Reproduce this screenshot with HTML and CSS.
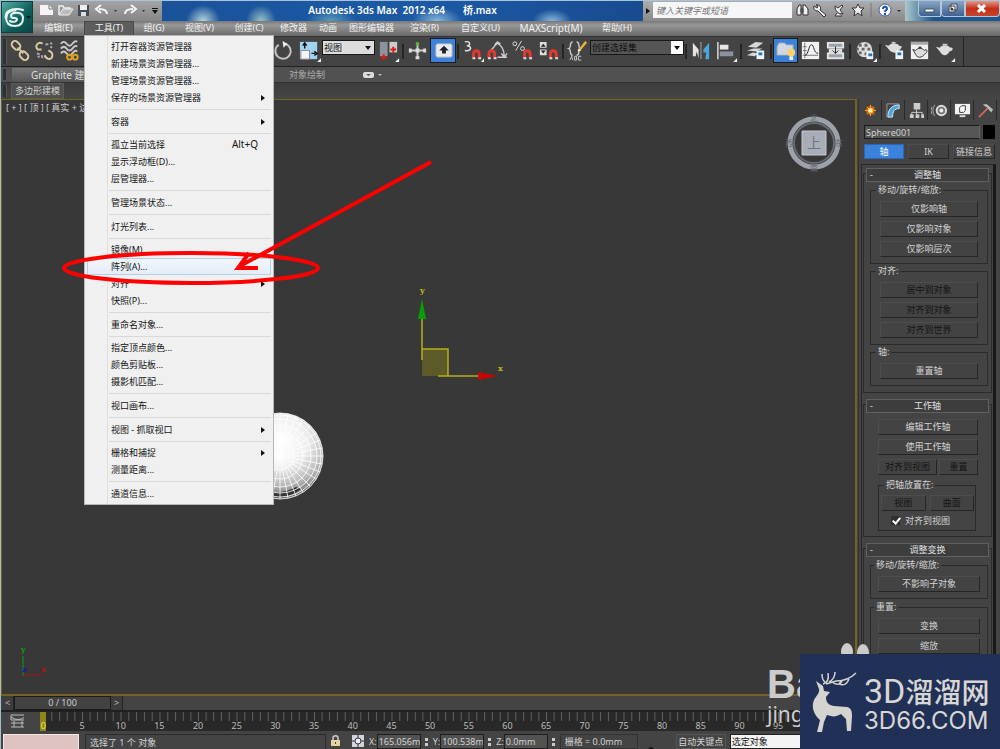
FILE: index.html
```html
<!DOCTYPE html>
<html lang="zh-CN">
<head>
<meta charset="utf-8">
<title>Autodesk 3ds Max 2012 x64 桥.max</title>
<link rel="stylesheet" href="styles.css">
</head>
<body>
<div class="app">
<header class="top">
  <button class="app-logo" aria-label="应用程序">
    <svg width="31" height="30" viewBox="0 0 31 30"><g fill="none" stroke="#e8f6f2" stroke-linecap="round"><path d="M21 8C14 6 4 7 4 15c0 8 5 9 9 9 6 0 8-4 8-8 0-5-5-6-9-5-4 1-4 5 0 5 3 0 4 1 2 3-1 1-4 1-6 0" stroke-width="2"/><path d="M4 15c0-5 4-7 9-7" stroke-width="3"/></g><path d="M24 14h5l-2.500 3z" fill="#0a2020"/></svg>
  </button>
  <div class="titlebar">
    <div class="quick">
      <svg width="126" height="18" viewBox="0 0 126 18">
        <path d="M7 4h9l4 4v6H7z" fill="#f4f4f4"/><path d="M16 4v4h4" fill="none" stroke="#777"/>
        <path d="M26 14V5h4l1 2h6v2" fill="none" stroke="#eee" stroke-width="1.500"/><path d="M26 14l4-6h10l-4 6z" fill="#bbb" stroke="#f0f0f0"/>
        <path d="M45 4h11v11H45z" fill="#444b55"/><path d="M47 4h7v5h-7z" fill="#eee"/><path d="M48 11h5v4h-5z" fill="#ddd"/>
        <path d="M74 13c0-4-3-5-8-5M68 4l-5 4 5 4" fill="none" stroke="#f4f4f4" stroke-width="2"/>
        <path d="M92 13c0-4 3-5 8-5M98 4l5 4-5 4" fill="none" stroke="#f4f4f4" stroke-width="2"/>
        <path d="M81 9h3l-1.500 2zM109 9h3l-1.500 2z" fill="#333"/><path d="M119 9h6l-3 4zM119 7h6v1h-6z" fill="#111"/>
      </svg>
    </div>
    <div class="caption"><span>Autodesk 3ds Max&nbsp; 2012 x64</span><span>桥.max</span></div>
    <div class="infocenter">
      <svg width="10" height="18" viewBox="0 0 10 18"><path d="M3 7l4 3-4 3z" fill="#111"/></svg>
      <input class="search" aria-label="搜索" placeholder="键入关键字或短语">
      <svg width="113" height="18" viewBox="0 0 113 18">
        <g fill="#eee" stroke="#333"><path d="M5 14V8l2-4h2v10zM11 14V4h2l3 4v6zM9 8h2v3H9z"/><path d="M24 4c3-1 6 2 4 5l6 5-2 2-6-6c-3 0-5-2-4-5l3 2 1-2z"/><path d="M43 5c0 5 3 8 8 8l-3-4 3-4-1-1-4 3zM45 12l-2 3h7"/><path d="M66 3l2 4h4l-3 3 1 5-4-3-4 3 1-5-3-3h4z"/></g>
        <path d="M79 2v14" stroke="#777"/><circle cx="93" cy="9" r="6" fill="#fff" stroke="#3d63a8"/><path d="M91 8c0-3 4-3 4 0 0 1-2 1-2 3M93 12v2" fill="none" stroke="#1d4faf" stroke-width="2"/><path d="M105 9h4l-2 2z" fill="#333"/>
      </svg>
    </div>
    <div class="window-buttons">
      <button aria-label="最小化"><svg width="12" height="10"><path d="M1 5h9v3H1z" fill="#fff" stroke="#456"/></svg></button><button aria-label="还原"><svg width="12" height="11"><path d="M4 1h6v6H4zM2 3h6v6H2z" fill="#eee" stroke="#445"/><path d="M4 5h2v2H4z" fill="#345"/></svg></button><button class="close" aria-label="关闭"><svg width="12" height="10"><path d="M2 1l7 7M9 1L2 8" stroke="#fff" stroke-width="3"/></svg></button>
    </div>
  </div>
  <nav class="menubar">
    <button class="w-edit">编辑(E)</button><button class="w-tools open">工具(T)</button><button class="w-group">组(G)</button><button class="w-views">视图(V)</button><button class="w-create">创建(C)</button><button class="w-mod">修改器</button><button class="w-anim">动画</button><button class="w-graph">图形编辑器</button><button class="w-render">渲染(R)</button><button class="w-custom">自定义(U)</button><button class="w-script">MAXScript(M)</button><button class="w-help">帮助(H)</button>
  </nav>
</header>

<div class="toolbar">
  <i class="grip"></i>
  <button aria-label="选择并链接"><svg viewBox="0 0 24 24"><g fill="none" stroke="#d9c9a0" stroke-width="2"><rect x="3" y="3" width="10" height="7" rx="3.500" transform="rotate(45 8 7)"/><rect x="12" y="14" width="10" height="7" rx="3.500" transform="rotate(45 17 17)"/><path d="M10 9l6 6"/></g></svg></button>
  <button aria-label="断开链接"><svg viewBox="0 0 24 24"><g fill="none" stroke="#d9c9a0" stroke-width="2"><path d="M10 5c-4-3-9 2-5 6l4 0M16 12c6 2 5 8 1 9-3 0-4-2-5-4"/></g><path d="M13 6l3-1M18 4l2 1M18 8l2 1M4 15l3 1M5 19l2-1M9 17l1 3" stroke="#aaa" stroke-width="2"/></svg></button>
  <button aria-label="绑定到空间扭曲"><svg viewBox="0 0 24 24"><path d="M3 5q3-4 6 0t6 0 5-2M3 10q3-4 6 0t6 0 5-2M3 15q3-4 6 0t6 0 5-2" fill="none" stroke="#c8c8c8" stroke-width="2"/><g fill="none" stroke="#e0a020" stroke-width="2"><circle cx="12" cy="19" r="2.500"/><circle cx="18" cy="19" r="2.500"/></g></svg></button>
  <span class="covered"></span>
  <button class="wide" aria-label="选择并旋转"><svg viewBox="0 0 24 24"><path d="M14 5a8 8 0 1 1-7 1" fill="none" stroke="#c4c4c4" stroke-width="2"/><path d="M11 2l5 3-4 4z" fill="#eee"/></svg></button>
  <button class="wide" aria-label="选择并缩放"><svg viewBox="0 0 24 24"><path d="M2 3h18v18H2z" fill="#9fd3f0"/><path d="M3 12h9v9H3z" fill="#f4f4f4" stroke="#889"/><path d="M7 10V5M5 7l2-3 2 3M14 15h4M17 13l3 2-3 2" fill="none" stroke="#111" stroke-width="1.500"/><path d="M24 20v4h-4z" fill="#fff"/></svg></button>
  <div class="combo light"><select aria-label="参考坐标系"><option>视图</option></select></div>
  <button class="wide" aria-label="使用轴点中心"><svg viewBox="0 0 24 24"><path d="M3 3h8v15H3z" fill="#8d939c"/><path d="M13 3h8v11h-8z" fill="#ccc"/><path d="M7 16v6M4 19h6M17 8v6M14 11h6" stroke="#e01515" stroke-width="2"/><path d="M23 20v4h-4z" fill="#fff"/></svg></button>
  <i class="sep"></i>
  <button aria-label="选择并操纵"><svg viewBox="0 0 24 24"><path d="M12 4v16M4 12h16" stroke="#ccc" stroke-width="2"/><path d="M10 10h4v4h-4zM3 10h3v4H3zM18 10h3v4h-3zM10 18h4v3h-4z" fill="#ddd"/><circle cx="12" cy="5" r="2" fill="#52b82e"/></svg></button>
  <button class="wide active" aria-label="键盘快捷键覆盖"><svg viewBox="0 0 24 24"><rect x="4" y="5" width="17" height="14" rx="2" fill="#e8ebef" stroke="#aaa"/><path d="M12.500 7l5 5h-3v3h-4v-3h-3z" fill="#222"/></svg></button>
  <i class="sep"></i>
  <button aria-label="捕捉开关"><svg viewBox="0 0 24 24"><path d="M4 3q5-1 5 2 0 2-3 2 4 0 4 3-1 3-6 2" fill="none" stroke="#ddd" stroke-width="1.500"/><path d="M13 20v-4c0-5 6-5 6 0v4" fill="none" stroke="#e23a30" stroke-width="3"/><path d="M12 19h3v2h-3zM18 19h3v2h-3z" fill="#ddd"/><path d="M24 20v4h-3z" fill="#fff"/></svg></button>
  <button aria-label="角度捕捉"><svg viewBox="0 0 24 24"><path d="M5 12l8-9M11 4c5 2 8 7 8 14M12 19h10M9 6l3-3 3 2M16 15l3 4 3-4" fill="none" stroke="#ccc" stroke-width="1.500"/><path d="M3 20v-4c0-5 6-5 6 0v4" fill="none" stroke="#e23a30" stroke-width="3"/><path d="M2 19h3v2H2zM8 19h3v2H8z" fill="#ddd"/></svg></button>
  <button aria-label="百分比捕捉"><svg viewBox="0 0 24 24"><path d="M11 2L5 12" stroke="#ddd"/><circle cx="4" cy="5" r="2" fill="none" stroke="#ddd"/><circle cx="12" cy="10" r="2" fill="none" stroke="#ddd"/><path d="M14 20v-4c0-5 6-5 6 0v4" fill="none" stroke="#e23a30" stroke-width="3"/><path d="M13 19h3v2h-3zM19 19h3v2h-3z" fill="#ddd"/></svg></button>
  <button class="wide" aria-label="微调器捕捉"><svg viewBox="0 0 24 24"><path d="M3 3h7v6H3zM3 11h7v6H3z" fill="#ddd"/><path d="M4 8l2.500-3 2.500 3zM4 12h5l-2.500 3z" fill="#222"/><path d="M14 20v-4c0-5 6-5 6 0v4" fill="none" stroke="#e23a30" stroke-width="3"/><path d="M13 19h3v2h-3zM19 19h3v2h-3z" fill="#ddd"/></svg></button>
  <i class="sep"></i>
  <button aria-label="编辑命名选择集"><svg viewBox="0 0 24 24"><path d="M7 3c-4 0-1 6-4 7 3 1 0 7 4 7M11 3c4 0 1 6 4 7-3 1 0 7-4 7" fill="none" stroke="#ccc" stroke-width="1.500"/><path d="M13 11l7-9 2 2-7 8z" fill="#f0b030"/><path d="M12 13l1-3 3 2z" fill="#eee"/><path d="M4 22l2-4 1 4M9 18h2v4H9zM16 18h-3v4h3" fill="none" stroke="#ccc"/></svg></button>
  <div class="combo dark"><select aria-label="命名选择集"><option>创建选择集</option></select></div>
  <i class="sep"></i>
  <button aria-label="镜像"><svg viewBox="0 0 24 24"><path d="M4 4l6 7v9L8 13l-1 5H4z" fill="#e5e5e5"/><path d="M21 4l-6 7v3h3l-1 7h4z" fill="#4aa5da"/><path d="M12.500 3v18" stroke="#aaa"/></svg></button>
  <button class="wide" aria-label="对齐"><svg viewBox="0 0 24 24"><path d="M3 3v18" stroke="#ddd" stroke-width="1.500"/><path d="M5 6h9v5H5z" fill="#e5e5e5"/><path d="M5 13h14v5H5z" fill="#8b91a0"/><path d="M23 20v4h-4z" fill="#fff"/></svg></button>
  <i class="sep"></i>
  <button class="wide" aria-label="层管理器"><svg viewBox="0 0 24 24"><path d="M3 8l8-5 8 1-7 5zM2 12l7-2 9 0-6 3zM2 17l6-3 6 1-4 3z" fill="#d7d7d7"/><path d="M12 12h8v9h-8z" fill="#eef4fa"/><path d="M14 14h4v3h-4z" fill="#2874b8"/></svg></button>
  <i class="sep"></i>
  <button class="active" aria-label="石墨建模工具"><svg viewBox="0 0 24 24"><path d="M3 8l2-4h6l2 2h7v11H3z" fill="#d3d9e2" stroke="#8a96a8"/><circle cx="18" cy="14" r="4" fill="#ffd36a"/><path d="M16 18h4v4h-4z" fill="#eee"/></svg></button>
  <button aria-label="曲线编辑器"><svg viewBox="0 0 24 24"><path d="M3 3h18v18H3z" fill="#f2f2f2"/><path d="M6 4v16M4 17h16M4 8h4M4 12h4" stroke="#777"/><path d="M6 17c4 0 4-11 7-11s2 9 7 9" fill="none" stroke="#223"/></svg></button>
  <button aria-label="图解视图"><svg viewBox="0 0 24 24"><path d="M3 3h18v7H3zM3 14h18v7H3z" fill="#e4e4e4"/><path d="M5 5h14v3H5zM5 16h14v3H5z" fill="#9aa2ae"/><path d="M5 10h14v5H5z" fill="#ddd"/><path d="M12 8v7M9 12l3 3 3-3" fill="none" stroke="#222"/></svg></button>
  <i class="sep"></i>
  <button class="wide" aria-label="材质编辑器"><svg viewBox="0 0 24 24"><circle cx="11" cy="11" r="8" fill="#ddd"/><path d="M5 5h3v3H5zM11 5h3v3h-3zM8 9h3v3H8zM14 9h3v3h-3zM5 13h3v3H5zM11 14h2v3h-2zM3 9h2v3H3z" fill="#666"/><path d="M13 13h7v8h-7z" fill="#eef4fa"/><path d="M15 15h4v3h-4z" fill="#2874b8"/><path d="M24 20v4h-4z" fill="#fff"/></svg></button>
  <i class="sep"></i>
  <button aria-label="渲染设置"><svg viewBox="0 0 24 24"><path d="M2 6l4 1c2-3 9-3 11 0l3 1-3 4c-2 3-7 3-10 0z" fill="#ddd"/><path d="M9 3h4v2H9z" fill="#ccc"/><path d="M13 12h8v9h-8z" fill="#eef4fa"/><path d="M15 14h4v3h-4z" fill="#2874b8"/></svg></button>
  <button aria-label="渲染帧窗口"><svg viewBox="0 0 24 24"><path d="M3 3h18v18H3z" fill="#f0f0f0"/><path d="M3 3h18v3H3z" fill="#aaa"/><path d="M5 11l3 1c2-3 7-3 9 0l2-1c2 2 0 4-2 5-2 4-8 4-9 0z" fill="#ddd" stroke="#333"/><path d="M11 8h3v2h-3z" fill="#333"/></svg></button>
  <button aria-label="渲染产品"><svg viewBox="0 0 24 24"><path d="M3 8l4 1c2-3 9-3 11 0 4-1 3 4-1 4-2 5-7 5-9 1z" fill="#ddd"/><path d="M10 5h5v2h-5z" fill="#ccc"/><path d="M23 20v4h-4z" fill="#fff"/></svg></button>
  <i class="sep end"></i>
</div>

<div class="ribbon-tabs"><i class="grip"></i><button class="on">Graphite 建模工具</button><button class="off">对象绘制</button><svg width="20" height="8" viewBox="0 0 20 8"><rect x="0" y="1" width="11" height="6" rx="2" fill="#ddd"/><path d="M3 3h5L5.500 5z" fill="#555"/><path d="M15 3h4l-2 2z" fill="#bbb"/></svg></div>
<div class="ribbon-panel"><i class="grip"></i><button>多边形建模</button></div>

<div class="body">
  <main class="work">
    <section class="viewport">
      <span class="vp-label">[ + ] [ 顶 ] [ 真实 + 边面 ]</span>
      <svg class="sphere" width="90" height="90" viewBox="0 0 90 90">
        <defs><radialGradient id="ball" cx="52%" cy="32%" r="68%"><stop offset="0" stop-color="#fff"/><stop offset=".45" stop-color="#eee"/><stop offset=".75" stop-color="#bbb"/><stop offset="1" stop-color="#666"/></radialGradient></defs>
        <circle cx="45" cy="45" r="43" fill="url(#ball)"/>
        <path d="M30 84q20 7 36-6l-5-2q-14 8-30 4z" fill="#333"/>
        <g fill="none" stroke="#fff" stroke-opacity=".8"><circle cx="45" cy="45" r="43"/><circle cx="45" cy="45" r="41"/><circle cx="45" cy="45" r="37"/><circle cx="45" cy="45" r="31"/><circle cx="45" cy="45" r="23"/><circle cx="45" cy="45" r="14"/>
        <path d="M2 45h86M45 2v86M15 15l60 60M75 15L15 75M5 29l80 32M5 61l80-32M29 5l32 80M61 5L29 85M3 37l84 16M3 53l84-16M37 3l16 84M53 3L37 87M9 22l72 46M9 68l72-46M22 9l46 72M68 9L22 81"/></g>
      </svg>
      <svg class="gizmo" width="90" height="95" viewBox="0 0 90 95">
        <path d="M5 62h26v27H5z" fill="#5c5a29"/><path d="M5 73V30M5 62h26v27M21 89h42" fill="none" stroke="#b5ae1a" stroke-width="1.500"/>
        <path d="M5 12l4 20H1z" fill="#0a9c0a"/><path d="M61 85l20 4-20 4z" fill="#c60505"/>
        <text x="3" y="6">y</text><text x="81" y="84">x</text>
      </svg>
      <svg class="cube" width="62" height="62" viewBox="0 0 62 62">
        <circle cx="31" cy="31" r="24" fill="none" stroke="#9da2aa" stroke-width="5"/><circle cx="31" cy="31" r="20" fill="none" stroke="#666b73" stroke-width="2"/>
        <path d="M19 19h24v24H19z" fill="#a9adb8" stroke="#c5c8d0"/><g class="north"><text x="31" y="9">北</text><text x="31" y="59">南</text><text x="6" y="34">西</text><text x="56" y="34">东</text></g><text class="up" x="31" y="36">上</text>
      </svg>
      <svg class="axis" width="30" height="32" viewBox="0 0 30 32"><path d="M3 9v20" stroke="#0a9c0a"/><path d="M3 28h20" stroke="#a01515"/><text x="1" y="5">y</text><text x="2" y="25">z</text><text x="21" y="25">x</text></svg>
    </section>
    <div class="timeslider"><button>&lt;</button><button class="thumb">0 / 100</button><button>&gt;</button></div>
    <div class="track">
      <svg class="track-icon" width="16" height="15" viewBox="0 0 16 15"><path d="M1 1h14v5H1zM1 9h14M1 13h14M4 7v6M12 7v6M1 3q7 5 14 0" fill="none" stroke="#bbb"/></svg>
      <div class="ruler"><span class="now">0</span><span>5</span><span>10</span><span>15</span><span>20</span><span>25</span><span>30</span><span>35</span><span>40</span><span>45</span><span>50</span><span>55</span><span>60</span><span>65</span><span>70</span><span>75</span><span>80</span><span>85</span><span>90</span><span>95</span><span></span></div>
    </div>
    <footer class="status">
      <div class="listener"></div>
      <div class="prompt">选择了 1 个 对象</div>
      <svg width="9" height="12" viewBox="0 0 9 12"><path d="M2 5V3c0-3 5-3 5 0v2" fill="none" stroke="#ccc" stroke-width="1.500"/><path d="M0 5h9v6H0z" fill="#e6d39c"/><path d="M4 7h1v2H4z" fill="#444"/></svg>
      <svg class="abs" width="12" height="12" viewBox="0 0 12 12"><path d="M0 0h12v12H0z" fill="#cfd4dc"/><path d="M6 0v12M0 6h12" stroke="#334"/><circle cx="6" cy="6" r="3" fill="#eee" stroke="#334"/></svg>
      <label>X:<input value="165.056mm"></label><i class="spin"></i>
      <label>Y:<input value="100.538mm"></label><i class="spin"></i>
      <label>Z:<input value="0.0mm"></label><i class="spin"></i>
      <div class="gridsize">栅格 = 0.0mm</div>
      <svg class="key" width="32" height="16" viewBox="0 0 32 16"><path d="M8 16l3-2 3 2" fill="none" stroke="#111" stroke-width="2"/></svg>
      <button class="autokey">自动关键点</button>
      <select class="keysel" aria-label="关键点过滤"><option>选定对象</option></select>
    </footer>
  </main>

  <aside class="panel">
    <div class="tabs">
      <button aria-label="创建"><svg viewBox="0 0 18 18"><circle cx="9" cy="9" r="5" fill="#c4560f"/><circle cx="9" cy="9" r="3" fill="#ffc93c"/><path d="M9 3v12M3 9h12M5 5l8 8M13 5l-8 8" stroke="#f09a28"/><circle cx="9" cy="9" r="2" fill="#fff0b0"/></svg></button>
      <button aria-label="修改"><svg viewBox="0 0 18 18"><path d="M3 16C3 8 7 3 15 3v4c-5 0-7 3-7 9z" fill="#4fa8e0" stroke="#d8ecfa"/><path d="M2 16V2h13" fill="none" stroke="#999"/></svg></button>
      <button class="here" aria-label="层次"><svg viewBox="0 0 18 18"><path d="M6 1h7v7H6zM2 13h4v4H2zM8 13h4v4H8zM14 13h3v4h-3z" fill="#ccc"/><path d="M9 8v5M4 13v-2h11v2" fill="none" stroke="#ccc"/></svg></button>
      <button aria-label="运动"><svg viewBox="0 0 18 18"><circle cx="11" cy="9" r="5" fill="#777" stroke="#ddd" stroke-width="2"/><circle cx="11" cy="9" r="2" fill="#eee"/><path d="M4 3q-4 6 0 12M1 5q-2 4 0 8" fill="none" stroke="#aaa"/></svg></button>
      <button aria-label="显示"><svg viewBox="0 0 18 18"><path d="M1 2h16v11H1z" fill="#f2f2f2"/><path d="M6 6l2-2h4v5l-2 2H6z" fill="#fff" stroke="#333"/><path d="M6 15h6" stroke="#ddd" stroke-width="2"/></svg></button>
      <button aria-label="实用程序"><svg viewBox="0 0 18 18"><path d="M2 16L12 6" stroke="#c56b5a" stroke-width="2"/><path d="M6 3l4-1 7 6-2 3-4-5z" fill="#bbb"/></svg></button>
    </div>
    <div class="namerow"><input value="Sphere001" aria-label="对象名称"><i class="swatch"></i></div>
    <div class="modes"><button class="active">轴</button><button>IK</button><button>链接信息</button></div>
    <div class="rollouts">
      <section class="rollout">
        <h3><span>-</span>调整轴</h3>
        <fieldset><legend>移动/旋转/缩放:</legend><button>仅影响轴</button><button>仅影响对象</button><button>仅影响层次</button></fieldset>
        <fieldset><legend>对齐:</legend><button disabled>居中到对象</button><button disabled>对齐到对象</button><button disabled>对齐到世界</button></fieldset>
        <fieldset><legend>轴:</legend><button>重置轴</button></fieldset>
      </section>
      <section class="rollout working">
        <h3><span>-</span>工作轴</h3>
        <button>编辑工作轴</button><button>使用工作轴</button>
        <div class="pair first"><button disabled>对齐到视图</button><button disabled>重置</button></div>
        <fieldset class="place"><legend>把轴放置在:</legend><div class="pair"><button disabled>视图</button><button disabled>曲面</button></div>
        <label class="check"><input type="checkbox" checked>对齐到视图</label></fieldset>
      </section>
      <section class="rollout broad">
        <h3><span>-</span>调整变换</h3>
        <fieldset><legend>移动/旋转/缩放:</legend><button>不影响子对象</button></fieldset>
        <fieldset><legend>重置:</legend><button>变换</button><button>缩放</button></fieldset>
      </section>
    </div>
  </aside>
</div>
</div>

<ul class="menu">
  <li>打开容器资源管理器</li><li>新建场景资源管理器...</li><li>管理场景资源管理器...</li><li class="sub">保存的场景资源管理器</li><li class="line"></li>
  <li class="sub">容器</li><li class="line"></li>
  <li>孤立当前选择<kbd>Alt+Q</kbd></li><li>显示浮动框(D)...</li><li>层管理器...</li><li class="line"></li>
  <li>管理场景状态...</li><li class="line"></li>
  <li>灯光列表...</li><li class="line"></li>
  <li>镜像(M)...</li><li class="hover">阵列(A)...</li><li class="sub">对齐</li><li>快照(P)...</li><li class="line"></li>
  <li>重命名对象...</li><li class="line"></li>
  <li>指定顶点颜色...</li><li>颜色剪贴板...</li><li>摄影机匹配...</li><li class="line"></li>
  <li>视口画布...</li><li class="line"></li>
  <li class="sub">视图 - 抓取视口</li><li class="line"></li>
  <li class="sub">栅格和捕捉</li><li>测量距离...</li><li class="line"></li>
  <li>通道信息...</li>
</ul>

<svg class="marker" width="380" height="140" viewBox="0 0 380 140"><g fill="none" stroke="#f00" stroke-width="4"><ellipse cx="131" cy="118" rx="127" ry="15"/><path d="M371 12L180 116M189 103l-11 15h20"/></g></svg>

<div class="baidu"><svg width="30" height="18" viewBox="0 0 30 18"><ellipse cx="7" cy="10" rx="6" ry="9" fill="#ccc"/><ellipse cx="23" cy="11" rx="6" ry="9" fill="#ccc"/></svg><b>Ba</b><span>jing</span></div>
<div class="brand">
  <svg width="46" height="62" viewBox="0 0 46 62"><path d="M4 10l7 5 1 5 6 1-4 5c0 5 2 8 8 9l13 1c5 1 5 6 5 9l-1 15h-4l-1-12-5-5c-5 3-8 3-14 1l-3 7-2 10H5l3-12C2 44-1 36 2 29c2-4 6-7 5-11z" fill="#d5d3d0"/><path d="M11 13c4-1 6-5 5-11M13 11c-3-2-3-5-3-8M17 11c4-2 6-5 6-10M14 13l10-3c9 0 15-3 20-8M30 9l-3 4c5 2 8 0 10-5M20 11c5 4 9 2 10-1" fill="none" stroke="#d5d3d0" stroke-width="1.500"/></svg>
  <div><strong><span>3D</span>溜溜网</strong><em>3D66.COM</em></div>
</div>
</body>
</html>
```
FILE: styles.css
```css
* { box-sizing: border-box; }
body {
  margin: 0;
  background: #444;
  color: #d2d2d2;
  font: 9px/12px "Noto Sans", "Noto Sans CJK SC", sans-serif;
  overflow: hidden;
}
button, input, select { font: inherit; color: inherit; margin: 0; padding: 0; border: 0; background: none; border-radius: 0; min-width: 0; }
svg { display: block; flex: none; }
.app { height: 100vh; display: flex; flex-direction: column; border-left: 1px solid #a7bccb; }

/* title and menu bar */
.top { display: grid; grid-template: 20px 16px / 32px 1fr; border-top: 1px solid #a9c4da; background: #666; flex: none; height: 36px; }
.app-logo { grid-row: 1 / 3; align-self: start; height: 32px; border: 1px solid #123f3c; background: linear-gradient(135deg, #55aca0, #0c5d5b 60%, #0a4746); z-index: 1; }
.titlebar { display: flex; background: linear-gradient(90deg, #1a4f94, #1c5aa6 40%, #17478a 70%, #1b4d8e); }
.quick { width: 129px; background: linear-gradient(#a4a4a4, #868686); }
.caption { flex: 1; display: flex; justify-content: center; gap: 18px; line-height: 18px; font-size: 10px; font-weight: 600; color: #fff; white-space: nowrap; background: radial-gradient(ellipse at bottom, #b6d4d9, transparent 70%) 24px 4px / 34px 16px no-repeat, radial-gradient(ellipse at bottom, #9cc3c4, transparent 70%) 84px 4px / 30px 16px no-repeat, radial-gradient(ellipse at bottom, #5c9bb8, transparent 70%) 144px 8px / 50px 12px no-repeat, radial-gradient(ellipse at bottom, #88b7dc, transparent 70%) 250px 6px / 50px 14px no-repeat, radial-gradient(ellipse at bottom, #88b7dc, transparent 70%) 370px 8px / 40px 12px no-repeat; }
.infocenter { display: flex; background: linear-gradient(#adadad, #8a8a8a); }
.search { width: 139px; height: 16px; margin-top: 1px; padding-left: 3px; background: #f6f6f6; font-style: italic; }
.search::placeholder { color: #777; opacity: 1; }
.window-buttons { display: flex; width: 95px; padding: 0 0 4px 13px; background: linear-gradient(90deg, #aac7c9, #20558f 30%); }
.window-buttons button { flex: 23; display: grid; place-items: center; border: 1px solid #b4c6da; border-top: 0; background: linear-gradient(#8ba5c4, #3e628f); border-radius: 0 0 0 4px; }
.window-buttons button.close { flex: 36; background: linear-gradient(#e2998a, #c3301b 50%, #c6452d); border-radius: 0 0 4px 0; }
.menubar { grid-column: 2; display: flex; background: linear-gradient(#787878, #989898 25%, #646464); white-space: nowrap; }
.menubar button { color: #f2f2f2; line-height: 12px; padding-bottom: 2px; }
.menubar .open { background: #5d5d5d; border: 1px solid #484848; }
.w-edit { width: 51px; } .w-tools { width: 50px; } .w-group { width: 40px; } .w-views { width: 51px; } .w-create { width: 48px; } .w-mod { width: 41px; } .w-anim { width: 28px; }
.w-graph { width: 59px; } .w-render { width: 47px; } .w-custom { width: 65px; } .menubar .w-script { width: 76px; font-size: 10px; } .w-help { width: 56px; }

/* main toolbar */
.toolbar { display: flex; flex: none; height: 31px; padding-left: 2px; align-items: flex-start; background: #444; border-bottom: 1px solid #222; border-top: 1px solid #333; }
.toolbar button { width: 25px; height: 25px; margin-top: 1px; flex: none; display: grid; place-items: center; }
.toolbar .wide { width: 26px; }
.toolbar svg { width: 23px; height: 23px; }
.toolbar .active { background: #3b82dc; border: 1px solid #1c1c1c; }
.grip { width: 4px; margin: 2px 0; align-self: stretch; background: #303030; border-right: 1px solid #555; flex: none; }
.covered { width: 188px; flex: none; }
.sep { width: 2px; height: 15px; margin: 7px 1px 0; background: #262626; flex: none; }
.sep.end { height: 29px; margin: 0 0 0 6px; width: 1px; }
.combo { flex: none; height: 15px; margin-top: 3px; border: 1px solid #181818; position: relative; }
.combo select, .keysel { appearance: none; width: 100%; height: 13px; line-height: 12px; padding-left: 1px; display: block; }
.combo::after { content: ""; position: absolute; right: 3px; top: 5px; border: 3px solid transparent; border-top: 4px solid #111; border-bottom: 0; pointer-events: none; }
.light { width: 53px; background: #dcdcdc; color: #111; }
.dark { width: 94px; color: #0c0c0c; background: linear-gradient(90deg, #555 80px, #fff 80px); }
.ribbon-tabs { display: flex; flex: none; height: 16px; align-items: center; background: #515151; border-bottom: 1px solid #333; color: #aaa; padding-left: 2px; }
.ribbon-tabs .on { width: 259px; height: 14px; padding-left: 19px; margin: 1px 0 0 5px; text-align: left; font-size: 10px; background: linear-gradient(#777, #555); color: #ddd; }
.ribbon-tabs .off { width: 72px; margin: 0 20px 0 0; }
.ribbon-panel { display: flex; flex: none; height: 16px; background: linear-gradient(#3d3d3d, #464646); padding-left: 2px; }
.ribbon-panel button { padding: 0 3px; margin-left: 4px; background: #505050; border: 1px solid #5e5e5e; }

/* viewport column */
.body { flex: 1; min-height: 0; display: grid; grid-template-columns: 1fr 142px; }
.work { min-width: 0; min-height: 0; display: flex; flex-direction: column; }
.viewport { flex: 1; position: relative; margin-right: 1px; background: #383838; border: 2px solid #76621f; border-width: 1px 2px 2px 1px; overflow: hidden; }
.vp-label { display: block; padding: 2px 4px; white-space: pre; color: #ccc; }
.sphere { position: absolute; left: 233px; top: 311px; }
.gizmo { position: absolute; left: 415px; top: 187px; overflow: visible; }
.gizmo text, .axis text { font: bold 8px "DejaVu Serif", serif; fill: #c5bd19; }
.axis { position: absolute; left: 18px; bottom: 15px; overflow: visible; }
.axis text:nth-of-type(1) { fill: #0a9c0a; } .axis text:nth-of-type(2) { fill: #1818b0; } .axis text:nth-of-type(3) { fill: #b01515; }
.cube { position: absolute; right: 10px; top: 12px; }
.cube text { text-anchor: middle; }
.north text { font-size: 8px; fill: #626870; }
.up { font-size: 14px; fill: #70747e; }
.timeslider { display: flex; flex: none; height: 14px; padding-left: 1px; background: #444; }
.timeslider button { width: 12px; background: #3d3d3d; color: #bbb; border-right: 1px solid #222; line-height: 12px; }
.timeslider .thumb { width: 97px; background: #424242; border: 1px solid #1c1c1c; color: #ccc; }
.track { display: flex; flex: none; height: 21px; background: #444; border-top: 2px solid #202020; }
.track-icon { margin: 2px 0 0 9px; width: 16px; }
.ruler { flex: 1; display: flex; margin-right: 22px; margin-left: -2px; }
.ruler span { flex: 1 1 0; min-width: 0; text-align: center; padding-top: 8px; line-height: 11px; color: #bbb; background: linear-gradient(90deg, transparent 50%, #606060 50%, #606060 calc(50% + 1px), transparent calc(50% + 1px)) 0 0 / 20% 9px repeat-x #292929; }
.ruler .now { background: linear-gradient(90deg, #444 calc(50% - 3px), #8e861a calc(50% - 3px), #8e861a calc(50% + 3px), transparent calc(50% + 3px)), linear-gradient(90deg, transparent 50%, #606060 50%, #606060 calc(50% + 1px), transparent calc(50% + 1px)) 0 0 / 20% 9px repeat-x #292929; color: #f0e860; }
.status { display: flex; flex: none; height: 18px; align-items: flex-start; padding: 3px 0 0 2px; overflow: hidden; white-space: nowrap; background: #444; }
.status > * { flex: none; }
.listener { width: 76px; height: 16px; background: #dfc3c3; border: 1px solid #f2e6e6; margin-right: 6px; }
.prompt { width: 241px; height: 16px; padding: 2px 4px; border: 1px solid #2c2c2c; margin-right: 5px; }
.status .abs { margin: 1px 5px 0 12px; }
.status > svg:first-of-type { margin-top: 1px; }
.status label { display: flex; line-height: 15px; }
.status input { width: 44px; height: 15px; background: #525252; border: 1px solid #1e1e1e; padding-left: 1px; }
.spin { width: 5px; height: 10px; margin: 3px 4px 0 3px; background: linear-gradient(#ccc, #ccc) 1px 1px / 3px 3px no-repeat, linear-gradient(#ccc, #ccc) 1px 6px / 3px 3px no-repeat; }
.gridsize { width: 78px; height: 15px; padding: 1px 4px; border: 1px solid #333; }
.key { margin-left: 2px; }
.autokey { height: 15px; width: 50px; margin: 0 4px; border: 1px solid #555; }
.status .keysel { width: 80px; height: 15px; background: #f4f4f4; color: #111; border: 1px solid #222; }

/* command panel */
.panel { display: flex; flex-direction: column; min-width: 0; min-height: 0; overflow: hidden; background: #444; border-left: 1px solid #303030; }
.panel button { white-space: nowrap; }
.tabs { display: flex; flex: none; height: 25px; padding-top: 1px; }
.tabs button { width: 23px; height: 20px; display: grid; place-items: center; border-right: 1px solid #2a2a2a; }
.tabs svg { width: 17px; height: 17px; }
.namerow { display: flex; gap: 3px; padding: 1px 5px 5px 5px; flex: none; }
.namerow input { flex: 1; height: 14px; background: #555; border: 1px solid #1c1c1c; border-right-color: #666; padding-left: 1px; }
.swatch { width: 12px; background: #000; }
.modes { display: grid; grid-template-columns: 40px 41px 42px; gap: 4px; padding-left: 5px; flex: none; height: 20px; }
.modes button { height: 15px; }
.modes button, .rollout button { border: 1px solid #4d4d4d; border-right-color: #262626; border-bottom-color: #262626; background: #434343; }
.modes .active { background: #3b82dc; border-color: #2d66b0; color: #fff; }
.rollouts { flex: 1; min-height: 0; overflow: hidden; padding: 8px 1px 0 1px; margin: 0 4px 0 2px; border-left: 1px solid #2a2a2a; border-right: 3px solid #191919; border-top: 1px solid #2a2a2a; }
.rollout { border: 1px solid #2b2b2b; margin-bottom: 11px; padding: 0 2px 6px; display: flex; flex-direction: column; }
.rollout h3 { margin: -6px 0 2px; height: 14px; line-height: 12px; font-size: 9px; font-weight: 400; text-align: center; background: #3d3d3d; border: 1px solid #606060; color: #e0e0e0; position: relative; }
.rollout h3 span { position: absolute; left: 3px; }
.rollout fieldset { margin: 0 1px 1px 4px; padding: 5px 9px 6px 9px; border: 1px solid #2b2b2b; display: grid; gap: 4px; }
.rollout fieldset:last-child { margin-bottom: 0; }
.rollout legend { margin-left: -4px; padding: 0 2px; line-height: 12px; height: 12px; }
.rollout button { height: 16px; line-height: 14px; width: 100%; }
.rollout button:disabled { color: #141414; }
.working { gap: 4px; padding: 0 13px 5px 14px; }
.working h3 { margin: -6px -11px 2px -12px; }
.pair { display: grid; grid-template-columns: 1fr 1fr; gap: 4px; }
.pair.first { grid-template-columns: 59px 1fr; gap: 2px; }
.rollout .place { margin: 0 2px 0 0; padding: 4px 1px 3px 2px; gap: 3px; }
.rollout .place legend { margin-left: 3px; }
.check { display: flex; align-items: center; gap: 5px; padding-left: 10px; height: 13px; }
.check input { appearance: none; width: 9px; height: 9px; background: #303030; position: relative; }
.check input:checked::after { content: ""; position: absolute; left: 3px; top: 0; width: 3px; height: 6px; border: solid #fff; border-width: 0 2px 2px 0; transform: rotate(40deg); }
.broad fieldset { padding-left: 7px; padding-right: 7px; margin-bottom: 2px; }

/* drop-down menu */
.menu { position: absolute; left: 84px; top: 35px; width: 190px; height: 470px; margin: 0; padding: 2px; list-style: none; display: flex; flex-direction: column; color: #151515; background: linear-gradient(90deg, #f0f0f0 22px, #dedede 22px, #dedede 23px, #f0f0f0 23px); border: 1px solid #b8b8b8; }
.menu li { height: 17px; line-height: 17px; padding-left: 24px; flex: none; position: relative; white-space: nowrap; }
.menu .line { flex: 1; height: auto; margin-left: 22px; background: linear-gradient(#d8d8d8, #d8d8d8) 0 3px / 100% 1px no-repeat; }
.menu .hover { background: linear-gradient(#f2f6fb, #e3ecf7); outline: 1px solid #b4d0ec; outline-offset: -1px; }
.menu .sub::after { content: ""; position: absolute; right: 6px; top: 6px; border: 3px solid transparent; border-left: 4px solid #111; border-right: 0; }
.menu kbd { font: 10px/17px "Noto Sans", sans-serif; position: absolute; right: 13px; top: 0; }
.marker { position: absolute; left: 60px; top: 150px; pointer-events: none; }

/* watermarks */
.baidu { position: absolute; left: 767px; bottom: 15px; width: 110px; height: 92px; color: #ccc; }
.baidu svg { margin-left: 73px; }
.baidu b { display: block; font: bold 40px/40px "Liberation Sans", sans-serif; margin-top: 4px; }
.baidu span { display: block; font: 21px/20px "Noto Sans", sans-serif; }
.brand { position: absolute; right: 0; bottom: 0; width: 200px; height: 95px; display: flex; gap: 6px; padding: 17px 0 0 12px; background: #213056; color: #d8d6d3; white-space: nowrap; }
.brand strong { display: flex; font: 500 28px/40px "Noto Sans CJK SC", sans-serif; }
.brand strong span { font: 34px/40px Roboto, sans-serif; }
.brand em { display: block; font: normal 24px/20px Inter, sans-serif; }
```
